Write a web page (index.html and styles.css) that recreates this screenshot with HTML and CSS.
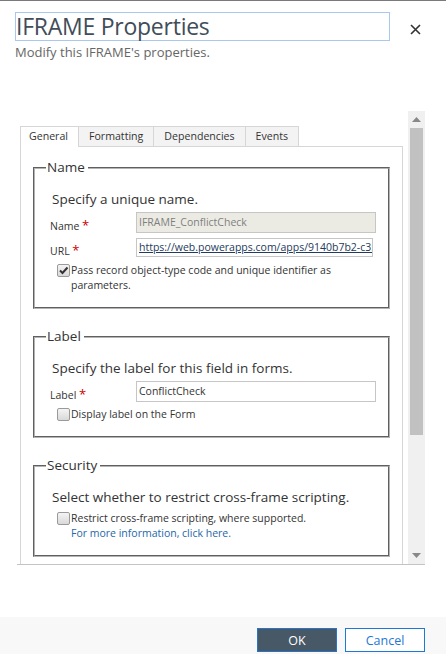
FILE: index.html
```html
<!DOCTYPE html>
<html lang="en">
<head>
<meta charset="utf-8">
<title>IFRAME Properties</title>
<link rel="stylesheet" href="styles.css">
</head>
<body>
<div class="dialog">
  <header class="head">
    <div class="title-row">
      <div class="title-box">IFRAME Properties</div>
      <span class="close" aria-label="Close">
        <svg width="11" height="11" viewBox="0 0 11 11"><path d="M1 1L10 10M10 1L1 10" stroke="#333" stroke-width="1.6" fill="none"/></svg>
      </span>
    </div>
    <div class="subtitle">Modify this IFRAME's properties.</div>
  </header>

  <div class="frame">
    <div class="frame-content">
      <div class="tabs">
        <span class="tab active">General</span>
        <span class="tab">Formatting</span>
        <span class="tab">Dependencies</span>
        <span class="tab">Events</span>
      </div>
      <div class="pane">
        <fieldset class="group">
          <legend>Name</legend>
          <div class="intro">Specify a unique name.</div>
          <div class="row">
            <span class="lbl">Name <span class="req">*</span></span>
            <span class="input disabled">IFRAME_ConflictCheck</span>
          </div>
          <div class="row">
            <span class="lbl">URL <span class="req">*</span></span>
            <span class="input url">https://web.powerapps.com/apps/9140b7b2-c35</span>
          </div>
          <div class="check">
            <span class="box checked"><svg width="11" height="11" viewBox="0 0 11 11"><path d="M2 5.5L4.5 8L9.5 2.5" stroke="#333" stroke-width="2" fill="none"/></svg></span>
            <span class="check-text">Pass record object-type code and unique identifier as parameters.</span>
          </div>
        </fieldset>

        <fieldset class="group">
          <legend>Label</legend>
          <div class="intro">Specify the label for this field in forms.</div>
          <div class="row">
            <span class="lbl">Label <span class="req">*</span></span>
            <span class="input">ConflictCheck</span>
          </div>
          <div class="check">
            <span class="box"></span>
            <span class="check-text">Display label on the Form</span>
          </div>
        </fieldset>

        <fieldset class="group">
          <legend>Security</legend>
          <div class="intro">Select whether to restrict cross-frame scripting.</div>
          <div class="check">
            <span class="box"></span>
            <span class="check-text">Restrict cross-frame scripting, where supported.<br><a class="more" href="#">For more information, click here.</a></span>
          </div>
        </fieldset>
      </div>
    </div>
    <div class="scrollbar">
      <div class="arrow"><svg width="9" height="5" viewBox="0 0 9 5"><path d="M0 5L4.5 0L9 5Z" fill="#888"/></svg></div>
      <div class="thumb"></div>
      <div class="track"></div>
      <div class="arrow"><svg width="9" height="5" viewBox="0 0 9 5"><path d="M0 0L9 0L4.5 5Z" fill="#888"/></svg></div>
    </div>
  </div>

  <div class="spacer"></div>

  <footer class="foot">
    <button class="btn primary">OK</button>
    <button class="btn secondary">Cancel</button>
  </footer>
</div>
</body>
</html>
```

FILE: styles.css
```css
html, body {
  margin: 0;
  padding: 0;
  background: #fff;
}

body {
  font-family: "Open Sans", "Noto Sans", "Liberation Sans", sans-serif;
  color: #333;
}

.dialog {
  width: 446px;
  height: 654px;
  box-sizing: border-box;
  border-top: 1px solid #7a7a7a;
  display: flex;
  flex-direction: column;
  overflow: hidden;
}

.head {
  padding: 11px 0 0 15px;
}

.title-row {
  display: flex;
  align-items: center;
}

.title-box {
  width: 375px;
  height: 29px;
  box-sizing: border-box;
  border: 1px solid #a8c8ef;
  font-size: 23px;
  line-height: 27px;
  color: #414d59;
  letter-spacing: -0.25px;
  white-space: nowrap;
}

.close {
  margin-left: 20px;
  margin-top: 5px;
  display: flex;
}

.subtitle {
  margin-top: 2px;
  font-size: 13px;
  line-height: 18px;
  color: #666;
}

.frame {
  margin-top: 50px;
  margin-left: 17px;
  width: 408px;
  height: 453px;
  border-bottom: 1px solid #c4c4c4;
  display: flex;
  flex-shrink: 0;
}

.frame-content {
  flex: 1;
  padding: 15px 5px 0 3px;
  overflow: hidden;
}

.tabs {
  display: flex;
  height: 20px;
  position: relative;
  z-index: 1;
}

.tab {
  box-sizing: border-box;
  height: 20px;
  border: 1px solid #d6d6d6;
  border-left: none;
  border-bottom: none;
  background: #f3f3f3;
  font-size: 10.6px;
  line-height: 19px;
  color: #333;
  padding: 0 10px;
  white-space: nowrap;
}

.tab:first-child {
  border-left: 1px solid #d6d6d6;
}

.tab.active {
  background: #fff;
  height: 21px;
  padding: 0 10px 0 8px;
}

.pane {
  box-sizing: border-box;
  width: 383px;
  height: 500px;
  border: 1px solid #d6d6d6;
  padding: 0 12px;
}

.group {
  margin: 12px 0 0;
  padding: 0 12px 14px 17px;
  border: 2px groove #b4b4b4;
  min-width: 0;
}

.group + .group {
  margin-top: 19px;
}

.group legend {
  font-size: 13.5px;
  line-height: 17px;
  padding: 0 3px 0 1px;
  margin-left: -6px;
  color: #333;
}

.intro {
  font-size: 13.5px;
  line-height: 17px;
  margin-top: 15px;
  margin-bottom: 4px;
  color: #333;
  white-space: nowrap;
}

.row {
  display: flex;
  align-items: center;
  height: 21px;
  margin-bottom: 4px;
}

.lbl {
  width: 86px;
  margin-left: -2px;
  font-size: 10.5px;
  color: #333;
  padding-top: 5px;
}

.req {
  color: #c00;
  font-size: 13px;
}

.input {
  box-sizing: border-box;
  width: 240px;
  height: 21px;
  border: 1px solid #c6c6c6;
  background: #fff;
  font-size: 10.5px;
  line-height: 19px;
  padding: 0 2px;
  color: #333;
  white-space: nowrap;
  overflow: hidden;
}

.input.disabled {
  background: #ebebe4;
  color: #7f7f7f;
}

.input.url {
  width: 237px;
  height: 19px;
  line-height: 17px;
  color: #243a5e;
  text-decoration: underline;
}

.check {
  display: flex;
  align-items: flex-start;
  margin-left: 5px;
  margin-top: 5px;
}

.box {
  box-sizing: border-box;
  flex-shrink: 0;
  width: 13px;
  height: 13px;
  border: 1px solid #9a9a9a;
  border-radius: 2px;
  background: linear-gradient(#f4f4f4, #d9d9d9);
  margin-top: 1px;
  display: flex;
  align-items: center;
  justify-content: center;
}

.check-text {
  font-size: 10.5px;
  line-height: 15px;
  color: #333;
  margin-left: 1px;
}

.more {
  color: #2468a8;
  text-decoration: none;
}

.scrollbar {
  width: 17px;
  background: #f0f0f0;
  display: flex;
  flex-direction: column;
  flex-shrink: 0;
}

.arrow {
  height: 17px;
  display: flex;
  align-items: center;
  justify-content: center;
}

.thumb {
  height: 307px;
  margin: 0 2px;
  background: #c1c1c1;
}

.track {
  flex: 1;
}

.spacer {
  flex: 1;
}

.foot {
  height: 37px;
  flex-shrink: 0;
  background: #f8f8f8;
  display: flex;
  justify-content: flex-end;
  align-items: flex-start;
  gap: 8px;
  padding: 11px 21px 0 0;
  box-sizing: border-box;
}

.btn {
  width: 80px;
  height: 24px;
  box-sizing: border-box;
  font-family: "Open Sans", "Noto Sans", sans-serif;
  font-size: 12.5px;
  padding: 0;
  border-radius: 0;
  cursor: pointer;
}

.btn.primary {
  background: #475867;
  border: 1px solid #2a73c6;
  color: #fff;
}

.btn.secondary {
  background: #fff;
  border: 1px solid #1e78d7;
  color: #1e78d7;
}
```
